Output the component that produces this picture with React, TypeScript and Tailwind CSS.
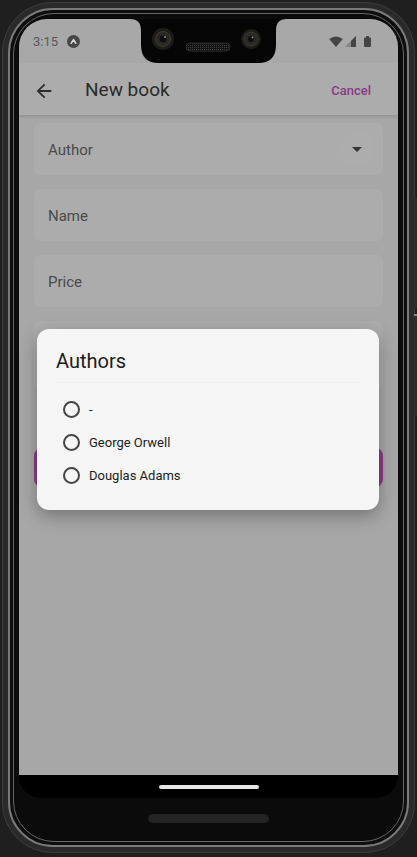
import React from 'react';

const AUTHORS = ['-', 'George Orwell', 'Douglas Adams'];
const FIELDS = ['Author', 'Name', 'Price'];

const Notch: React.FC = () => (
  <svg width="157" height="44" viewBox="0 0 157 44" className="shrink-0 block">
    <defs>
      <pattern id="grille" width="2" height="2" patternUnits="userSpaceOnUse">
        <rect width="2" height="2" fill="#141414" />
        <rect width="1" height="1" fill="#3b3b3b" />
      </pattern>
    </defs>
    <path d="M0 0H157C149 0 146 4 146 12V26Q146 44 128 44H29Q11 44 11 26V12C11 4 8 0 0 0Z" fill="#050505" />
    {/* front cameras */}
    <circle cx="33" cy="20" r="11" fill="#1d1c18" />
    <circle cx="33" cy="20" r="7.5" fill="#2b2924" stroke="#3f3b33" strokeWidth="1" />
    <circle cx="33" cy="20" r="3.5" fill="#0f0f0f" />
    <circle cx="35" cy="18" r="1" fill="#8a8a8a" />
    <circle cx="121" cy="20" r="10" fill="#1d1c18" />
    <circle cx="121" cy="20" r="7" fill="#2b2924" stroke="#3f3b33" strokeWidth="1" />
    <circle cx="121" cy="20" r="3" fill="#0f0f0f" />
    <circle cx="122.5" cy="18.5" r="1" fill="#8a8a8a" />
    {/* earpiece */}
    <rect x="56" y="24" width="44" height="8" rx="4" fill="url(#grille)" stroke="#2a2a2a" strokeWidth="1" />
  </svg>
);

const StatusBar: React.FC = () => (
  <div className="grid grid-cols-[1fr_auto_1fr] h-[44px] bg-[#a8a8a8] shrink-0">
    <div className="flex items-center pl-[14px]">
      <span className="text-[13px] text-[#575757] leading-none">3:15</span>
      <svg width="13" height="13" viewBox="0 0 13 13" className="ml-[9px]">
        <circle cx="6.5" cy="6.5" r="6.5" fill="#474747" />
        <path d="M4.2 8.2L6.5 4.6L8.8 8.2" stroke="#d8d8d8" strokeWidth="1.6" fill="none" strokeLinecap="round" strokeLinejoin="round" />
      </svg>
    </div>
    <Notch />
    <div className="flex items-center justify-end pr-[27px] gap-[2px]">
      <svg width="14" height="11" viewBox="0 0 14 11">
        <path d="M7 11L0.2 3.1Q7 -2.2 13.8 3.1Z" fill="#444" />
      </svg>
      <svg width="11" height="11" viewBox="0 0 11 11">
        <path d="M11 0V11H0Z" fill="#444" opacity="0.35" />
        <path d="M11 0V11H6V5Z" fill="#444" />
      </svg>
      <svg width="7" height="11" viewBox="0 0 7 11" className="ml-[6px]">
        <rect x="2" y="0" width="3" height="2" fill="#444" />
        <rect x="0" y="1.5" width="7" height="9.5" rx="1" fill="#444" />
      </svg>
    </div>
  </div>
);

const AppBar: React.FC = () => (
  <div className="relative z-10 flex items-center h-[52px] bg-[#acacac] pl-[14px] pr-[27px] pt-[3px] shadow-[0_2px_3px_rgba(0,0,0,0.12)] shrink-0">
    <svg width="22" height="22" viewBox="0 0 24 24">
      <path d="M20 11H7.83l5.59-5.59L12 4l-8 8 8 8 1.41-1.41L7.83 13H20v-2z" fill="#2e2e2e" />
    </svg>
    <span className="ml-[30px] text-[19px] text-[#2a2a2a]">New book</span>
    <span className="ml-auto text-[13px] font-medium text-[#893a84]">Cancel</span>
  </div>
);

const Field: React.FC<{ label: string; dropdown?: boolean }> = ({ label, dropdown }) => (
  <div className="flex items-center h-[52px] rounded-[6px] bg-[#acacac] pl-[14px] pr-[9px] pt-[3px]">
    <span className="text-[15px] text-[#4a4a4a]">{label}</span>
    {dropdown && (
      <div className="ml-auto -mt-[3px] w-[34px] h-[34px] rounded-full bg-white/[0.025] flex items-center justify-center">
        <svg width="10" height="5" viewBox="0 0 10 5">
          <path d="M0 0L5 5L10 0Z" fill="#363636" />
        </svg>
      </div>
    )}
  </div>
);

const AuthorsDialog: React.FC = () => (
  <div className="absolute left-[18px] top-[310px] w-[342px] rounded-[12px] bg-[#f5f5f5] shadow-[0_6px_18px_rgba(0,0,0,0.3)] pt-[20px] pb-[18px]">
    <h2 className="px-[19px] text-[20px] leading-[24px] text-[#1c1c1c]">Authors</h2>
    <div className="mx-[19px] mt-[9px] h-px bg-[#f0f0f0]" />
    <div className="mt-[10px] flex flex-col">
      {AUTHORS.map((name) => (
        <div key={name} className="flex items-center h-[33px] pl-[26px]">
          <span className="w-[17px] h-[17px] rounded-full border-2 border-[#454545]" />
          <span className="ml-[9px] text-[13px] text-[#1c1c1c]">{name}</span>
        </div>
      ))}
    </div>
  </div>
);

const App: React.FC = () => {
  return (
    <div className="w-full h-[857px] bg-[#1f1f1f] pt-[2px] pl-[2px] font-['Roboto',sans-serif] overflow-hidden">
      <div className="relative w-[413px] h-[851px] rounded-[50px] bg-[#2a2a2a] border border-[#3c3c3c] p-[5px] flex">
        {/* side buttons */}
        <div className="absolute left-[411px] top-[195px] w-[4px] h-[110px] rounded-r-[2px] bg-[#2c2c2c]" />
        <div className="absolute left-[411px] top-[311px] w-[4px] h-[102px] rounded-r-[2px] bg-[#2c2c2c] border-t-2 border-[#8a8a8a]" />

        <div className="flex-1 rounded-[45px] border-2 border-[#7a7a7a] bg-[#0e0e0e] p-[3px] flex">
          <div className="flex-1 rounded-[41px] border border-[#666] bg-[#0b0b0b] pt-[5px] px-[5px] flex flex-col">
            {/* display */}
            <div className="relative h-[779px] rounded-t-[28px] rounded-b-[22px] overflow-hidden flex flex-col shrink-0">
              <StatusBar />
              <AppBar />
              <div className="flex-1 bg-[#a7a7a7] px-[15px] pt-[8px] flex flex-col">
                <div className="flex flex-col gap-[14px]">
                  {FIELDS.map((f, i) => (
                    <Field key={f} label={f} dropdown={i === 0} />
                  ))}
                  <div className="h-[68px] rounded-[6px] bg-[#acacac]" />
                </div>
                <div className="mt-[58px] h-[41px] rounded-[9px] bg-[#8b3b86]" />
              </div>
              <div className="h-[23px] bg-black flex items-center justify-center shrink-0">
                <div className="w-[100px] h-[4px] rounded-full bg-[#e6e6e6]" />
              </div>
              <AuthorsDialog />
            </div>
            {/* bottom bezel */}
            <div className="flex-1 flex items-center justify-center pb-[3px]">
              <div className="w-[121px] h-[9px] rounded-full bg-[#1a1a1a] border border-[#222] bg-[radial-gradient(circle,#2f2f2f_0.6px,transparent_0.8px)] bg-[length:2px_2px]" />
            </div>
          </div>
        </div>
      </div>
    </div>
  );
};

export default App;
